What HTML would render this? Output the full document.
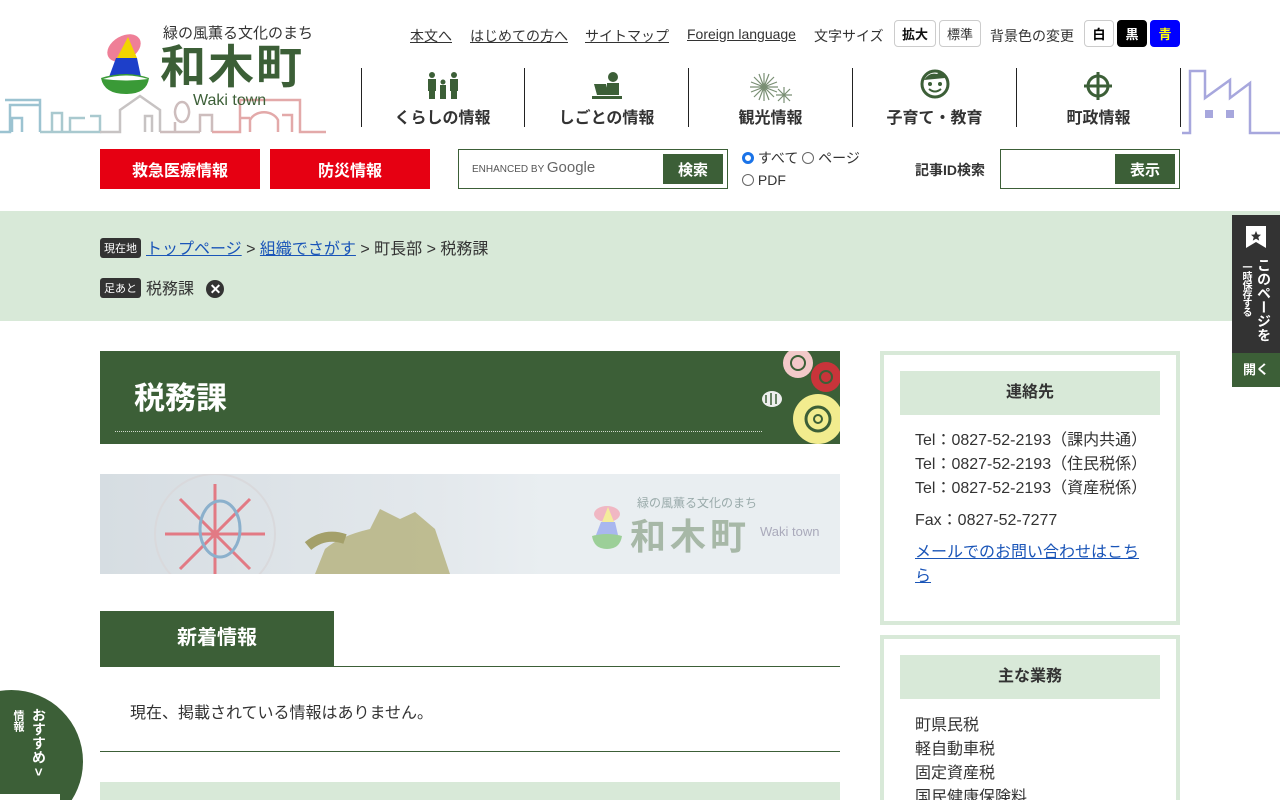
<!DOCTYPE html>
<html lang="ja"><head><meta charset="utf-8">
<style>
*{box-sizing:border-box;margin:0;padding:0}
html,body{width:1280px;height:800px;overflow:hidden}
body{position:relative;background:#fff;font-family:"Liberation Sans","Noto Sans CJK JP",sans-serif;color:#333}
.a{position:absolute}
.tl{font-size:14px;color:#333;text-decoration:underline;white-space:nowrap}
.btn{position:absolute;height:27px;border:1px solid #ccc;border-radius:4px;font-size:13px;display:flex;align-items:center;justify-content:center;top:20px}
.div{position:absolute;top:68px;width:1px;height:59px;background:#222}
.nv{position:absolute;top:104px;width:163px;text-align:center;font-size:16px;font-weight:bold;color:#333}
.red{position:absolute;top:149px;height:40px;width:160px;background:#e60012;color:#fff;font-weight:bold;font-size:16px;display:flex;align-items:center;justify-content:center}
.gbtn{position:absolute;background:#3c5f37;color:#fff;font-weight:bold;font-size:15px;display:flex;align-items:center;justify-content:center}
.tag{display:inline-block;background:#333;color:#fff;font-size:11px;padding:2px 4px;border-radius:3px;vertical-align:2px;margin-right:5px}
</style></head><body>
<!-- skyline -->
<svg class="a" style="left:0;top:60px" width="330" height="75" viewBox="0 0 330 75">
<g fill="none" stroke-width="2.5">
<path d="M0 72 H10 V45 H40 V40 H5 M40 40 V72 M12 72 V58 H22 V72" stroke="#9cc3d1"/>
<path d="M40 72 H100 V56 H90 M52 72 V53 H62 V72 M70 72 V58 H85 M100 56 V72" stroke="#a9c9cf"/>
<path d="M100 72 L120 72 V50 L140 36 L160 50 V72 M145 72 V56 H152 V72" stroke="#c7c3c3"/>
<path d="M160 72 H200 M175 72 V62 M182 62 a7 10 0 1 1 .1 0 M200 72 V55 H212 V72" stroke="#cdbdbd"/>
<path d="M212 72 H240 V58 H250 M240 72 V40 H300 V72 H326 M250 72 V60 a15 12 0 0 1 28 0 V72 M282 55 H292 V72" stroke="#e3a9a9"/>
</g>
</svg>
<svg class="a" style="left:1180px;top:68px" width="100" height="67"><path d="M2 65 H10 V3 H25 V30 L50 12 V30 L70 15 V65 H100" fill="none" stroke="#a7a7dd" stroke-width="2.5"/><rect x="25" y="42" width="8" height="8" fill="#a7a7dd"/><rect x="46" y="42" width="8" height="8" fill="#a7a7dd"/></svg>
<!-- logo -->
<svg class="a" style="left:100px;top:34px" width="52" height="60" viewBox="0 0 52 60">
<ellipse cx="24" cy="14" rx="18" ry="12" fill="#ef7f97" transform="rotate(-30 24 14)"/>
<path d="M28 3 L37 24 H17 Z" fill="#f2d400"/>
<path d="M16 24 H37 L41 43 H9 Z" fill="#1d3fc9"/>
<path d="M1 44 Q26 36 49 44 Q47 60 26 60 Q4 60 1 44Z" fill="#3a9a37"/>
<path d="M3 45 Q26 38 48 45 Q26 48 3 45Z" fill="#fff"/>
</svg>
<div class="a" style="left:163px;top:22px;font-size:15px;color:#333">緑の風薫る文化のまち</div>
<div class="a" style="left:160px;top:40px;font-size:46px;font-weight:bold;color:#3c5f37;letter-spacing:2px;line-height:54px">和木町</div>
<div class="a" style="left:193px;top:92px;font-size:16px;color:#3c5f37">Waki town</div>
<!-- top links -->
<span class="a tl" style="left:410px;top:26px">本文へ</span>
<span class="a tl" style="left:470px;top:26px">はじめての方へ</span>
<span class="a tl" style="left:585px;top:26px">サイトマップ</span>
<span class="a tl" style="left:687px;top:26px">Foreign language</span>
<span class="a" style="left:814px;top:26px;font-size:14px">文字サイズ</span>
<div class="btn" style="left:894px;width:42px;font-weight:bold;color:#111">拡大</div>
<div class="btn" style="left:939px;width:42px">標準</div>
<span class="a" style="left:990px;top:26px;font-size:14px">背景色の変更</span>
<div class="btn" style="left:1084px;width:30px;font-weight:bold;color:#000">白</div>
<div class="btn" style="left:1117px;width:30px;background:#000;color:#fff;border-color:#000;font-weight:bold">黒</div>
<div class="btn" style="left:1150px;width:30px;background:#00f;color:#ff0;border-color:#00f;font-weight:bold">青</div>
<!-- nav -->
<div class="div" style="left:361px"></div><div class="div" style="left:524px"></div><div class="div" style="left:688px"></div><div class="div" style="left:852px"></div><div class="div" style="left:1016px"></div><div class="div" style="left:1180px"></div>
<svg class="a" style="left:427px;top:72px" width="32" height="28" fill="#3c5f37"><circle cx="5" cy="3" r="3"/><circle cx="27" cy="3" r="3"/><circle cx="16" cy="10" r="2.5"/><rect x="1" y="7" width="8" height="12"/><rect x="23" y="7" width="8" height="12"/><rect x="2" y="18" width="6" height="9"/><rect x="24" y="18" width="6" height="9"/><rect x="13" y="13" width="6" height="14"/></svg>
<svg class="a" style="left:592px;top:72px" width="30" height="28" fill="#3c5f37"><circle cx="21" cy="5" r="5"/><rect x="15" y="11" width="12" height="12"/><path d="M2 12 H14 L17 23 H5Z"/><rect x="0" y="24" width="30" height="3"/></svg>
<svg class="a" style="left:748px;top:72px" width="46" height="32" stroke="#7a8f74" stroke-width="1.2"><g transform="translate(16 15)"><path d="M-14 0H14M0-14V14M-10-10L10 10M10-10L-10 10M-13-5L13 5M-13 5L13-5M-5-13L5 13M5-13L-5 13"/></g><g transform="translate(36 23)"><path d="M-8 0H8M0-8V8M-6-6L6 6M6-6L-6 6"/></g></svg>
<svg class="a" style="left:919px;top:68px" width="32" height="32"><circle cx="16" cy="16" r="13" fill="none" stroke="#3c5f37" stroke-width="3"/><path d="M5 12 Q10 4 18 6 Q22 2 26 10" fill="#3c5f37"/><circle cx="11" cy="16" r="2" fill="#3c5f37"/><circle cx="21" cy="16" r="2" fill="#3c5f37"/><path d="M10 21 Q16 26 22 21" fill="none" stroke="#3c5f37" stroke-width="2"/></svg>
<svg class="a" style="left:1084px;top:72px" width="28" height="28"><circle cx="14" cy="14" r="10" fill="none" stroke="#3c5f37" stroke-width="3"/><path d="M14 0V28M0 14H28" stroke="#3c5f37" stroke-width="3"/></svg>
<div class="nv" style="left:361px">くらしの情報</div>
<div class="nv" style="left:525px">しごとの情報</div>
<div class="nv" style="left:689px">観光情報</div>
<div class="nv" style="left:853px">子育て・教育</div>
<div class="nv" style="left:1017px">町政情報</div>
<!-- row 2 -->
<div class="red" style="left:100px">救急医療情報</div>
<div class="red" style="left:270px">防災情報</div>
<div class="a" style="left:458px;top:149px;width:270px;height:40px;border:1px solid #3c5f37"></div>
<div class="a" style="left:472px;top:159px;font-size:10px;color:#555">ENHANCED BY <span style="font-size:15px;color:#666">Google</span></div>
<div class="gbtn" style="left:663px;top:154px;width:60px;height:30px">検索</div>
<div class="a" style="left:742px;top:147px;font-size:14px;line-height:22px">
<div><span style="display:inline-block;width:12px;height:12px;border-radius:50%;border:3px solid #1a73e8;vertical-align:-1px"></span> すべて <span style="display:inline-block;width:12px;height:12px;border-radius:50%;border:1px solid #666;vertical-align:-1px"></span> ページ</div>
<div><span style="display:inline-block;width:12px;height:12px;border-radius:50%;border:1px solid #666;vertical-align:-1px"></span> PDF</div></div>
<div class="a" style="left:915px;top:160px;font-size:14px;font-weight:bold">記事ID検索</div>
<div class="a" style="left:1000px;top:149px;width:180px;height:40px;border:1px solid #3c5f37"></div>
<div class="gbtn" style="left:1115px;top:154px;width:60px;height:30px">表示</div>
<!-- breadcrumb -->
<div class="a" style="left:0;top:211px;width:1280px;height:110px;background:#d8e9d8"></div>
<div class="a" style="left:100px;top:235px;font-size:16px"><span class="tag">現在地</span><span style="color:#1a55b8;text-decoration:underline">トップページ</span> &gt; <span style="color:#1a55b8;text-decoration:underline">組織でさがす</span> &gt; 町長部 &gt; 税務課</div>
<div class="a" style="left:100px;top:275px;font-size:16px"><span class="tag">足あと</span>税務課 <span style="display:inline-block;width:18px;height:18px;border-radius:50%;background:#333;color:#fff;font-size:14px;line-height:18px;text-align:center;font-weight:bold;margin-left:8px">✕</span></div>
<!-- side bookmark -->
<div class="a" style="left:1232px;top:215px;width:48px;height:138px;background:#333"></div>
<svg class="a" style="left:1245px;top:225px" width="22" height="24"><path d="M1 1H21V23L11 17L1 23Z" fill="#fff"/><path d="M11 6l1.5 3.5 3.5.3-2.7 2.3.9 3.5-3.2-1.9-3.2 1.9.9-3.5-2.7-2.3 3.5-.3z" fill="#333"/></svg>
<div class="a" style="left:1255px;top:258px;color:#fff;font-size:14px;font-weight:bold;writing-mode:vertical-rl;line-height:18px">このページを</div>
<div class="a" style="left:1239px;top:262px;color:#fff;font-size:10px;font-weight:bold;writing-mode:vertical-rl;line-height:12px;letter-spacing:-1px">一時保存する</div>
<div class="a" style="left:1232px;top:353px;width:48px;height:34px;background:#3c5f37;color:#fff;font-size:13px;font-weight:bold;text-align:center;line-height:34px">開く</div>
<!-- title -->
<div class="a" style="left:100px;top:351px;width:740px;height:93px;background:#3c5f37"></div>
<div class="a" style="left:134px;top:373px;font-size:31px;font-weight:bold;color:#fff">税務課</div>
<div class="a" style="left:115px;top:431px;width:647px;border-top:1px dotted #cfd9cc"></div>
<svg class="a" style="left:758px;top:351px" width="82" height="93">
<circle cx="40" cy="12" r="15" fill="#f3c9c9"/><circle cx="40" cy="12" r="7" fill="none" stroke="#3c5f37" stroke-width="2"/>
<circle cx="68" cy="26" r="15" fill="#c9343a"/><circle cx="68" cy="26" r="6" fill="none" stroke="#3c5f37" stroke-width="2"/>
<circle cx="60" cy="68" r="25" fill="#f2ec8e"/><circle cx="60" cy="68" r="12" fill="none" stroke="#3c5f37" stroke-width="3"/><circle cx="60" cy="68" r="4" fill="none" stroke="#3c5f37" stroke-width="2"/>
<ellipse cx="14" cy="48" rx="10" ry="8" fill="#eee"/><path d="M8 44V52M13 42V54M18 43V53" stroke="#3c5f37" stroke-width="1.5"/>
</svg>
<!-- banner -->
<div class="a" style="left:100px;top:474px;width:740px;height:100px;background:linear-gradient(90deg,#d6dde2 0%,#e3e8ec 45%,#e9eef1 60%)"></div>
<svg class="a" style="left:100px;top:474px" width="420" height="100">
<circle cx="115" cy="60" r="60" fill="none" stroke="#d9d9dc" stroke-width="2"/>
<g stroke="#e27a84" stroke-width="3"><path d="M115 10V110M65 60H165M80 25L150 95M150 25L80 95"/></g>
<ellipse cx="120" cy="55" rx="20" ry="28" fill="none" stroke="#8bb0cc" stroke-width="3"/>
<path d="M215 100 L225 75 Q240 62 270 55 L280 35 L300 45 L315 38 L335 55 L350 100Z" fill="#b4b07a" opacity=".8"/>
<path d="M208 72 Q225 58 245 65" stroke="#a4a06a" stroke-width="10" fill="none"/>
</svg>
<svg class="a" style="left:590px;top:505px" width="34" height="44"><ellipse cx="17" cy="9" rx="13" ry="8" fill="#f0b7c3"/><path d="M18 2 L24 17H12Z" fill="#f4ec9b"/><path d="M11 17H25L28 30H6Z" fill="#a9b7ef"/><path d="M2 31 Q17 27 32 31 Q30 44 17 44 Q4 44 2 31Z" fill="#9ccf98"/></svg>
<div class="a" style="left:637px;top:494px;font-size:12px;color:#9aa">緑の風薫る文化のまち</div>
<div class="a" style="left:630px;top:508px;font-size:36px;font-weight:bold;color:#a7b8a7;letter-spacing:4px">和木町</div>
<div class="a" style="left:760px;top:524px;font-size:13px;color:#aab">Waki town</div>
<!-- 新着情報 -->
<div class="a" style="left:100px;top:611px;width:234px;height:55px;background:#3c5f37;color:#fff;font-size:20px;font-weight:bold;text-align:center;line-height:55px">新着情報</div>
<div class="a" style="left:100px;top:666px;width:740px;height:1px;background:#3c5f37"></div>
<div class="a" style="left:130px;top:699px;font-size:16px">現在、掲載されている情報はありません。</div>
<div class="a" style="left:100px;top:751px;width:740px;height:1px;background:#3c5f37"></div>
<div class="a" style="left:100px;top:782px;width:740px;height:18px;background:#d8e9d8"></div>
<!-- right boxes -->
<div class="a" style="left:880px;top:351px;width:300px;height:274px;border:4px solid #d8e9d8"></div>
<div class="a" style="left:900px;top:371px;width:260px;height:44px;background:#d8e9d8;font-size:16px;font-weight:bold;text-align:center;line-height:44px">連絡先</div>
<div class="a" style="left:915px;top:429px;font-size:16px;line-height:24px">Tel：0827-52-2193（課内共通）<br>Tel：0827-52-2193（住民税係）<br>Tel：0827-52-2193（資産税係）</div>
<div class="a" style="left:915px;top:509px;font-size:16px;line-height:24px">Fax：0827-52-7277</div>
<div class="a" style="left:915px;top:541px;width:230px;font-size:16px;line-height:24px;color:#1a55b8;text-decoration:underline">メールでのお問い合わせはこちら</div>
<div class="a" style="left:880px;top:635px;width:300px;height:200px;border:4px solid #d8e9d8;border-bottom:none"></div>
<div class="a" style="left:900px;top:655px;width:260px;height:44px;background:#d8e9d8;font-size:16px;font-weight:bold;text-align:center;line-height:44px">主な業務</div>
<div class="a" style="left:915px;top:714px;font-size:16px;line-height:24px">町県民税<br>軽自動車税<br>固定資産税<br>国民健康保険料</div>
<!-- osusume -->
<div class="a" style="left:0;top:690px;width:84px;height:110px;overflow:hidden">
<div class="a" style="left:-60px;top:0;width:143px;height:143px;border-radius:50%;background:#3c5f37"></div>
<div class="a" style="left:0;top:104px;width:60px;height:6px;background:#fff"></div>
<div class="a" style="left:30px;top:18px;color:#fff;font-size:14px;font-weight:bold;writing-mode:vertical-rl;line-height:18px">おすすめ &gt;</div>
<div class="a" style="left:12px;top:20px;color:#fff;font-size:11px;font-weight:bold;writing-mode:vertical-rl;line-height:12px">情報</div>
</div>
</body></html>
